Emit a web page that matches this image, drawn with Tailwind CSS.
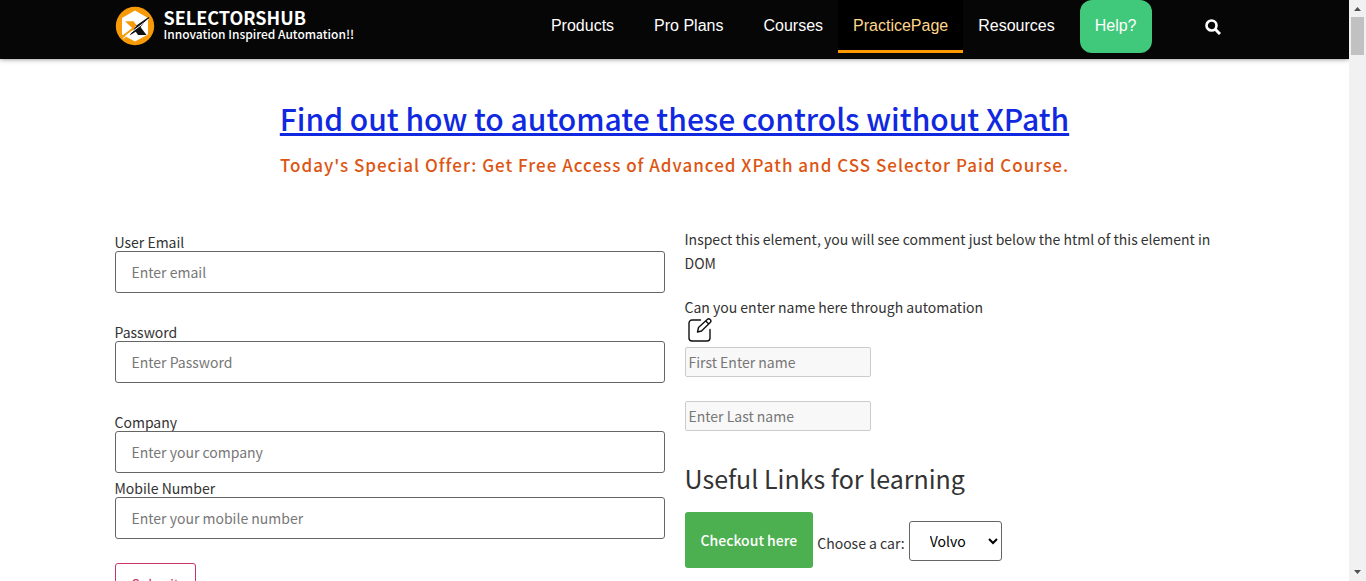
<!DOCTYPE html>
<html lang="en">
<head>
<meta charset="utf-8">
<meta name="viewport" content="width=device-width, initial-scale=1">
<title>SelectorsHub Practice Page</title>
<script src="https://cdn.jsdelivr.net/npm/@tailwindcss/browser@4"></script>
</head>
<body class="flex h-screen overflow-hidden bg-white font-['Noto_Sans_CJK_SC','Noto_Sans',sans-serif] text-sm leading-6 text-[#333]">
<div class="min-w-0 flex-1 overflow-hidden">
  <header class="relative bg-[#060606] shadow-[0_0_5px_rgba(0,0,0,0.5)]">
    <div class="mx-auto flex h-[59px] max-w-[1140px] items-start justify-between px-[10px]">
      <a href="#" class="flex items-center gap-[9px] pt-1.5 text-white">
        <svg class="size-10" viewBox="0 0 40 40" aria-hidden="true">
          <circle cx="20" cy="20" r="19.2" fill="#f79a07"/>
          <path d="M20 4.500 33 12V28.500L20 35.500 7 28.500V12Z" fill="#fff"/>
          <path d="M10 15.300H18.500L21.500 19.300 17.500 22.300Z" fill="#f79a07"/>
          <path d="M6.500 31.500 20.500 20.500" stroke="#f79a07" stroke-width="1.800"/>
          <path d="M20 21.500 34 11.500 25.500 21 31.500 29H23L20.800 25.800 14.500 29.500Z" fill="#111"/>
          <path d="M8 32.500 33.500 13.500" stroke="#fff" stroke-width="1"/>
          <path d="M21 20.500 34 11.500" stroke="#111" stroke-width="1.400"/>
        </svg>
        <span class="flex flex-col pb-0.5">
          <span class="text-lg font-bold leading-[18px]">SELECTORSHUB</span>
          <span class="text-xs font-medium leading-4">Innovation Inspired Automation!!</span>
        </span>
      </a>
      <nav class="flex font-['Liberation_Sans',Arial,sans-serif] text-base text-white" aria-label="Main">
        <a href="#" class="flex h-[53px] items-center pb-0.5 pl-[15px] pr-[25px]">Products</a>
        <a href="#" class="flex h-[53px] items-center pb-0.5 pl-[15px] pr-[25px]">Pro Plans</a>
        <a href="#" class="flex h-[53px] items-center px-[15px] pb-0.5">Courses</a>
        <a href="#" aria-current="page" class="flex h-[53px] items-center border-b-3 border-[#f90] bg-black px-[15px] pt-px text-[#ffd68a]">PracticePage</a>
        <a href="#" class="flex h-[53px] items-center pb-0.5 pl-[15px] pr-[25px]">Resources</a>
        <a href="#" class="flex h-[53px] items-center rounded-xl bg-[#41c97b] px-[15px] pb-0.5">Help?</a>
        <button type="button" aria-label="Search" class="ml-[53px] mr-[14px] flex h-[53px] items-center">
          <svg class="size-4" viewBox="0 0 16 16" fill="none" stroke="#fff" aria-hidden="true"><circle cx="6.500" cy="6.500" r="5" stroke-width="2.600"/><path d="M10.500 10.500 15 15" stroke-width="3"/></svg>
        </button>
      </nav>
    </div>
  </header>

  <main>
    <h1 class="pt-[35px] text-center text-3xl font-medium leading-12 text-[#1029e0]"><a href="#" class="underline">Find out how to automate these controls without XPath</a></h1>
    <h2 class="pt-[11px] text-center text-[17px] font-medium leading-6 tracking-[1px] text-[#dd5512]">Today's Special Offer: Get Free Access of Advanced XPath and CSS Selector Paid Course.</h2>

    <div class="mx-auto grid max-w-[1140px] grid-cols-2 pt-[50px]">
      <form class="flex flex-col px-[10px] pt-[7px]">
        <label for="email" class="pb-px leading-4">User Email</label>
        <input id="email" type="email" placeholder="Enter email" class="mb-[31px] h-[42px] rounded-[3px] border border-[#666] px-4 placeholder:text-[#777]">
        <label for="password" class="pb-px leading-4">Password</label>
        <input id="password" type="password" placeholder="Enter Password" class="mb-[31px] h-[42px] rounded-[3px] border border-[#666] px-4 placeholder:text-[#777]">
        <label for="company" class="pb-px leading-4">Company</label>
        <input id="company" type="text" placeholder="Enter your company" class="mb-[7px] h-[42px] rounded-[3px] border border-[#666] px-4 placeholder:text-[#777]">
        <label for="mobile" class="pb-px leading-4">Mobile Number</label>
        <input id="mobile" type="tel" placeholder="Enter your mobile number" class="mb-6 h-[42px] rounded-[3px] border border-[#666] px-4 placeholder:text-[#777]">
        <button type="button" class="h-[42px] self-start rounded-[3px] border border-[#c36] px-4 text-[#c36]">Submit</button>
      </form>

      <section class="flex flex-col items-start px-[10px]">
        <p>Inspect this element, you will see comment just below the html of this element in DOM</p>
        <p class="pt-5">Can you enter name here through automation</p>
        <svg class="-mt-px ml-[3px] size-6" viewBox="0 0 24 24" fill="none" stroke="#111" stroke-width="1.400" stroke-linejoin="round" stroke-linecap="round" aria-hidden="true">
          <path d="M12.500 2H4a3 3 0 0 0-3 3v15a3 3 0 0 0 3 3h15a3 3 0 0 0 3-3V11.500"/>
          <path d="M9.500 14l1-4.500 8.700-8a2 2 0 0 1 3 3L13.500 13ZM17.800 3l2.700 2.700"/>
        </svg>
        <input type="text" aria-label="First name" placeholder="First Enter name" class="mt-[5px] h-[30px] w-[186px] rounded-xs border border-[#ccc] bg-[#f8f8f8] px-[3px] placeholder:text-[#777]">
        <input type="text" aria-label="Last name" placeholder="Enter Last name" class="mt-6 h-[30px] w-[186px] rounded-xs border border-[#ccc] bg-[#f8f8f8] px-[3px] placeholder:text-[#777]">
        <h3 class="pt-[31px] text-[25px] leading-8">Useful Links for learning</h3>
        <div class="flex items-center gap-1 pt-[18px]">
          <button type="button" class="h-14 rounded-[3px] bg-[#4caf50] px-4 font-medium text-white">Checkout here</button>
          <label for="car" class="pt-1.5">Choose a car:</label>
          <select id="car" class="mt-0.5 h-10 w-[93px] rounded-[3px] border border-[#666] pl-4 text-black"><option>Volvo</option><option>Saab</option><option>Opel</option><option>Audi</option></select>
        </div>
      </section>
    </div>
  </main>
</div>
<div class="flex w-[17px] shrink-0 flex-col items-center bg-[#f1f1f1]" aria-hidden="true">
  <svg class="h-[17px] w-[17px]" viewBox="0 0 17 17"><path d="M5 11 8.500 7 12 11Z" fill="#505050"/></svg>
  <div class="h-[38px] w-[13px] bg-[#c1c1c1]"></div>
  <svg class="mt-auto h-[17px] w-[17px]" viewBox="0 0 17 17"><path d="M5 6 8.500 10 12 6Z" fill="#505050"/></svg>
</div>
</body>
</html>
